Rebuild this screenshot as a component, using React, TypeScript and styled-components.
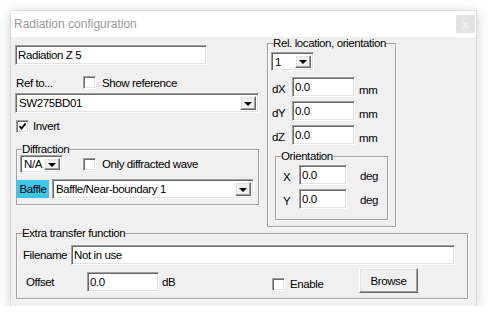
import styled, { createGlobalStyle, css } from "styled-components";

const GlobalStyle = createGlobalStyle`
  html, body {
    margin: 0;
    background: #fff;
  }
  body {
    font-family: "Liberation Sans", Arial, sans-serif;
    font-size: 11.5px;
    color: #000;
  }
`;

const sunken = css`
  box-sizing: border-box;
  border: 1px solid;
  border-color: #a0a0a0 #fff #fff #a0a0a0;
  box-shadow: inset 1px 1px 0 #696969, inset -1px -1px 0 #e3e3e3;
  background: #fff;
`;

const raised = css`
  box-sizing: border-box;
  border: 1px solid;
  border-color: #fff #696969 #696969 #fff;
  box-shadow: inset -1px -1px 0 #a0a0a0, inset 1px 1px 0 #e3e3e3;
  background: #f0f0f0;
`;

const Window = styled.div`
  box-sizing: border-box;
  width: 465px;
  height: 295px;
  margin: 11px 0 0 11px;
  background: #f0f0f0;
  box-shadow: 0 0 0 1px rgba(0, 0, 0, 0.06), 0 2px 12px rgba(0, 0, 0, 0.22);
  display: flex;
  flex-direction: column;
  overflow: hidden;
`;

const TitleBar = styled.div`
  height: 26px;
  flex: none;
  background: #fff;
  display: flex;
  align-items: center;
  justify-content: space-between;
  padding-left: 3px;
`;

const Title = styled.span`
  font-size: 12px;
  color: #9a9a9a;
`;

const CloseButton = styled.div`
  width: 19px;
  height: 18px;
  margin-right: 1px;
  background: #e3e3e3;
  color: #f6f6f6;
  font-size: 11px;
  font-weight: bold;
  display: flex;
  align-items: center;
  justify-content: center;
`;

const Body = styled.div`
  flex: 1;
  padding-left: 4px;
  letter-spacing: -0.4px;
  display: flex;
  flex-direction: column;
`;

const TopArea = styled.div`
  display: grid;
  grid-template-columns: 244px 129px;
  column-gap: 8px;
  align-items: start;
`;

const LeftColumn = styled.div`
  display: flex;
  flex-direction: column;
  padding-top: 8px;
`;

const Group = styled.fieldset<{ $w: number; $ml?: number; $mt?: number }>`
  box-sizing: border-box;
  width: ${(p) => p.$w}px;
  margin: ${(p) => p.$mt ?? 0}px 0 0 ${(p) => p.$ml ?? 0}px;
  padding: 0;
  min-width: 0;
  border: 1px solid #a0a0a0;
  box-shadow: inset 1px 1px 0 #fff, 1px 1px 0 #fff;
`;

const Legend = styled.legend`
  margin-left: 5px;
  padding: 0;
  height: 12px;
  line-height: 12px;
  font-size: 11.5px;
`;

const GroupInner = styled.div<{ $pad: string }>`
  padding: ${(p) => p.$pad};
  display: flex;
  flex-direction: column;
`;

const Row = styled.div<{ $mt?: number; $ml?: number; $h?: number; $align?: string }>`
  display: flex;
  align-items: ${(p) => p.$align ?? "center"};
  margin-top: ${(p) => p.$mt ?? 0}px;
  margin-left: ${(p) => p.$ml ?? 0}px;
  ${(p) => (p.$h ? `height: ${p.$h}px;` : "")}
`;

const Label = styled.span<{ $w?: number; $ml?: number; $mt?: number; $pl?: number }>`
  flex: none;
  ${(p) => (p.$w ? `width: ${p.$w}px;` : "")}
  margin-left: ${(p) => p.$ml ?? 0}px;
  margin-top: ${(p) => p.$mt ?? 0}px;
  padding-left: ${(p) => p.$pl ?? 0}px;
  box-sizing: border-box;
  white-space: nowrap;
  line-height: 14px;
`;

const TextBox = styled.input<{ $w: number; $h?: number; $mt?: number }>`
  ${sunken};
  flex: none;
  width: ${(p) => p.$w}px;
  height: ${(p) => p.$h ?? 20}px;
  margin: ${(p) => p.$mt ?? 0}px 0 0 0;
  padding: 0 2px;
  font: inherit;
  letter-spacing: inherit;
  color: #000;
  outline: none;
`;

const Combo = styled.div<{ $w: number; $h: number; $mt?: number; $ml?: number }>`
  ${sunken};
  flex: none;
  width: ${(p) => p.$w}px;
  height: ${(p) => p.$h}px;
  margin: ${(p) => p.$mt ?? 0}px 0 0 ${(p) => p.$ml ?? 0}px;
  padding: 2px;
  display: flex;
  align-items: center;
`;

const ComboValue = styled.span`
  flex: 1;
  padding-left: 1px;
  white-space: nowrap;
  overflow: hidden;
`;

const ArrowButton = styled.div`
  ${raised};
  width: 16px;
  align-self: stretch;
  display: flex;
  align-items: center;
  justify-content: center;
  &::after {
    content: "";
    border-left: 4px solid transparent;
    border-right: 4px solid transparent;
    border-top: 4px solid #000;
    margin-top: 1px;
  }
`;

const CheckBox = styled.span<{ $ml?: number; $mt?: number }>`
  ${sunken};
  flex: none;
  width: 13px;
  height: 13px;
  margin-left: ${(p) => p.$ml ?? 0}px;
  margin-top: ${(p) => p.$mt ?? 0}px;
  display: flex;
  align-items: center;
  justify-content: center;
`;

const BaffleTag = styled.span`
  flex: none;
  width: 32px;
  height: 18px;
  margin-right: 3px;
  background: #3ec6ef;
  display: flex;
  align-items: center;
  justify-content: center;
`;

const Button = styled.div`
  ${raised};
  flex: none;
  width: 59px;
  height: 25px;
  display: flex;
  align-items: center;
  justify-content: center;
`;

function Check({ checked, ml, mt }: { checked?: boolean; ml?: number; mt?: number }) {
  return (
    <CheckBox $ml={ml} $mt={mt}>
      {checked && (
        <svg width="9" height="9" viewBox="0 0 9 9">
          <polyline points="1.5,4 3.5,6.5 7.5,1.5" fill="none" stroke="#000" strokeWidth="1.8" />
        </svg>
      )}
    </CheckBox>
  );
}

function Dropdown({ value, w, h, mt, ml }: { value: string; w: number; h: number; mt?: number; ml?: number }) {
  return (
    <Combo $w={w} $h={h} $mt={mt} $ml={ml}>
      <ComboValue>{value}</ComboValue>
      <ArrowButton />
    </Combo>
  );
}

const offsets = [
  { label: "dX", mt: 6 },
  { label: "dY", mt: 4 },
  { label: "dZ", mt: 4 },
];

const angles = [
  { label: "X", mt: 3 },
  { label: "Y", mt: 4 },
];

export default function App() {
  return (
    <>
      <GlobalStyle />
      <Window>
        <TitleBar>
          <Title>Radiation configuration</Title>
          <CloseButton>x</CloseButton>
        </TitleBar>
        <Body>
          <TopArea>
            <LeftColumn>
              <TextBox $w={192} defaultValue="Radiation Z 5" readOnly />
              <Row $mt={9} $h={17}>
                <Label $w={68} $pl={1}>Ref to...</Label>
                <Check />
                <Label $ml={6}>Show reference</Label>
              </Row>
              <Dropdown value="SW275BD01" w={244} h={20} mt={2} />
              <Row $mt={6} $ml={1}>
                <Check checked />
                <Label $ml={4}>Invert</Label>
              </Row>
              <Group $w={243} $ml={1} $mt={10}>
                <Legend>Diffraction</Legend>
                <GroupInner $pad="0 4px 5px 0">
                  <Row $ml={3} $h={18}>
                    <Dropdown value="N/A" w={43} h={18} />
                    <Check ml={20} />
                    <Label $ml={6}>Only diffracted wave</Label>
                  </Row>
                  <Row $mt={6}>
                    <BaffleTag>Baffle</BaffleTag>
                    <Dropdown value="Baffle/Near-boundary 1" w={202} h={20} />
                  </Row>
                </GroupInner>
              </Group>
            </LeftColumn>

            <Group $w={129}>
              <Legend>Rel. location, orientation</Legend>
              <GroupInner $pad="0 0 6px 3px">
                <Dropdown value="1" w={43} h={19} mt={3} />
                {offsets.map((o) => (
                  <Row key={o.label} $mt={o.mt} $h={20}>
                    <Label $w={21} $pl={1} $mt={4}>{o.label}</Label>
                    <TextBox $w={63} defaultValue="0.0" readOnly />
                    <Label $ml={4} $mt={6}>mm</Label>
                  </Row>
                ))}
                <Group $w={113} $ml={4} $mt={5}>
                  <Legend>Orientation</Legend>
                  <GroupInner $pad="0 0 10px 7px">
                    {angles.map((a) => (
                      <Row key={a.label} $mt={a.mt} $h={20}>
                        <Label $w={16} $mt={4}>{a.label}</Label>
                        <TextBox $w={48} defaultValue="0.0" readOnly />
                        <Label $ml={13} $mt={2}>deg</Label>
                      </Row>
                    ))}
                  </GroupInner>
                </Group>
              </GroupInner>
            </Group>
          </TopArea>

          <Group $w={452} $ml={1}>
            <Legend>Extra transfer function</Legend>
            <GroupInner $pad="0 0 5px 6px">
              <Row $mt={6} $h={20}>
                <Label $w={48}>Filename</Label>
                <TextBox $w={384} defaultValue="Not in use" readOnly />
              </Row>
              <Row $mt={3} $h={25} $align="flex-start">
                <Label $w={64} $pl={3} $mt={7}>Offset</Label>
                <TextBox $w={72} $mt={4} defaultValue="0.0" readOnly />
                <Label $w={113} $pl={3} $mt={7}>dB</Label>
                <Check mt={10} />
                <Label $w={74} $pl={5} $mt={9}>Enable</Label>
                <Button>Browse</Button>
              </Row>
            </GroupInner>
          </Group>
        </Body>
      </Window>
    </>
  );
}
